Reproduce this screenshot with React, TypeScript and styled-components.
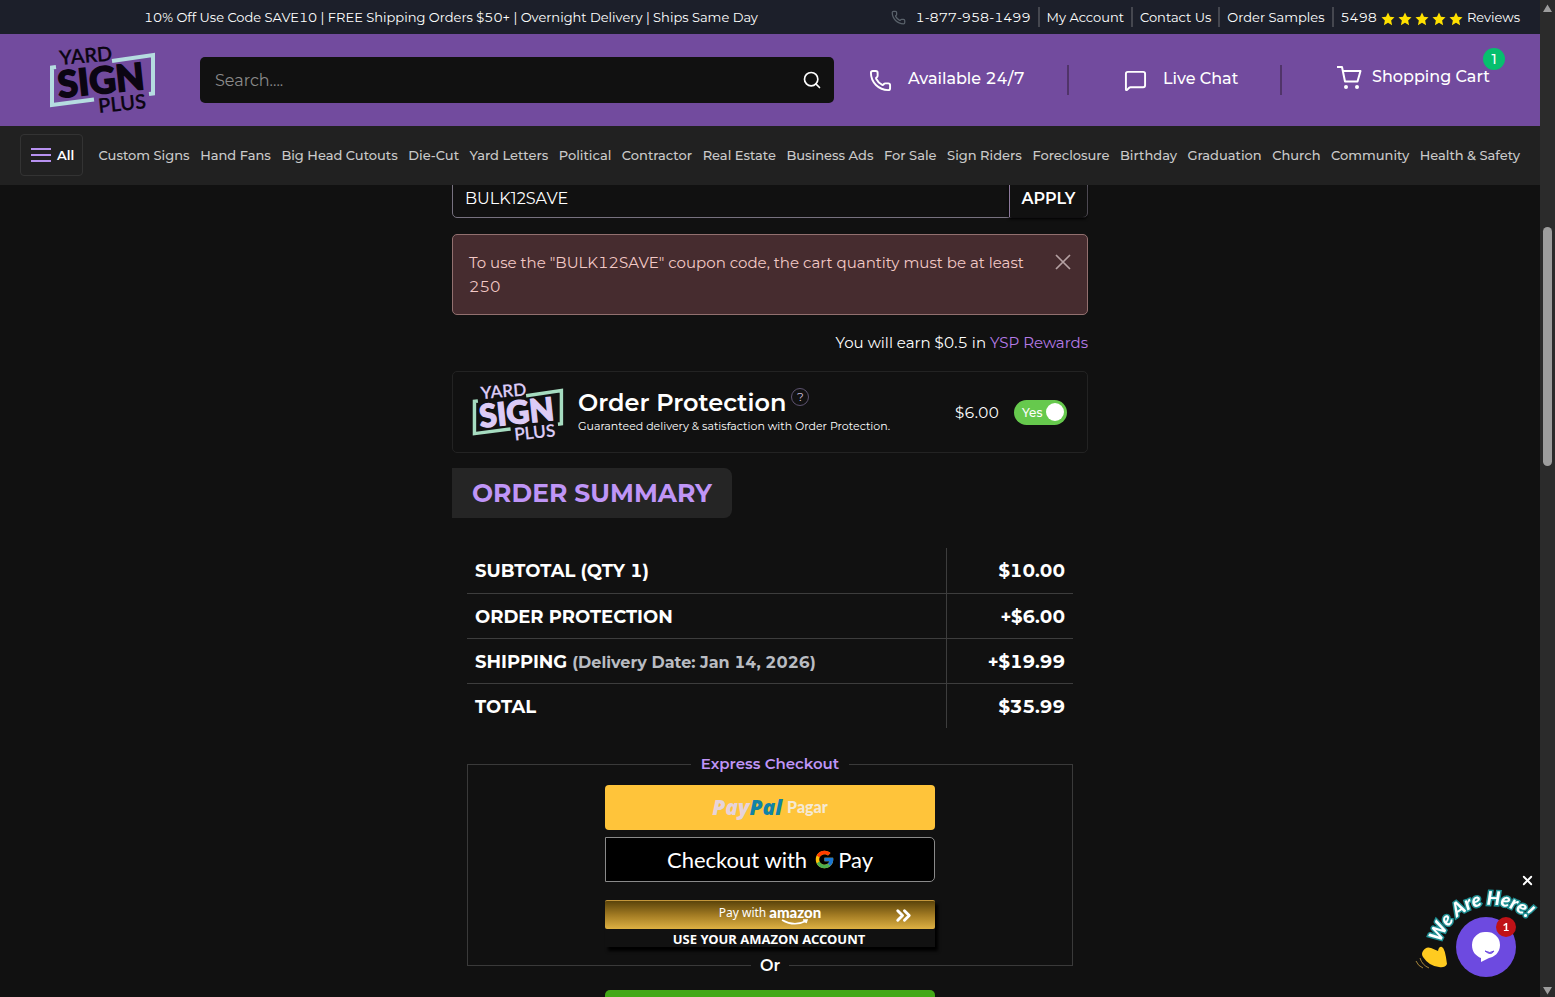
import React from "react";
import styled, { createGlobalStyle } from "styled-components";
import { ChevronsRight, MessageSquare, Phone, Search, X } from "lucide-react";
import { FcGoogle } from "react-icons/fc";

const GlobalStyle = createGlobalStyle`
  *, *::before, *::after { box-sizing: border-box; }
  body {
    margin: 0;
    background: #111;
    color: #fff;
    font-family: Montserrat, Inter, "Liberation Sans", sans-serif;
    font-size: 15px;
    font-variant-numeric: tabular-nums;
  }
  a { color: inherit; text-decoration: none; }
  button, input { font-family: inherit; color: inherit; }
  button { cursor: pointer; }
`;

const Shell = styled.div`
  display: grid;
  grid-template-columns: minmax(0, 1fr) 15px;
  height: 100vh;
  overflow: hidden;
`;

const Page = styled.div`
  display: flex;
  flex-direction: column;
  min-height: 0;
`;

const TopBar = styled.div`
  display: flex;
  align-items: center;
  justify-content: space-between;
  flex: none;
  height: 34px;
  padding: 0 20px 0 144px;
  background: #1c1f2a;
  font-size: 13px;
`;

const TopLinks = styled.div`
  display: flex;
  align-items: center;
`;

const TopLink = styled.a<{ $first?: boolean }>`
  display: flex;
  align-items: center;
  gap: ${(p) => (p.$first ? 10 : 4)}px;
  height: 20px;
  padding: 0 7px;
  border-left: ${(p) => (p.$first ? "0" : "2px solid #45474f")};
  &:last-child { padding-right: 0; }
`;

const Stars = styled.span`
  display: flex;
  gap: 3px;
  padding-top: 3px;
`;

const Header = styled.header`
  display: flex;
  align-items: center;
  flex: none;
  height: 92px;
  padding: 0 50px 0 48px;
  background: #724b9e;
`;

const LogoLink = styled.a`
  display: flex;
  flex: none;
  width: 152px;
`;

const SearchBox = styled.form`
  display: flex;
  align-items: center;
  flex: 1;
  height: 46px;
  margin-right: 35px;
  border-radius: 5px;
  background: #111;
`;

const SearchInput = styled.input`
  flex: 1;
  min-width: 0;
  height: 100%;
  padding: 0 15px;
  border: 0;
  outline: 0;
  background: transparent;
  font-size: 16px;
  &::placeholder { color: #8b8b8b; opacity: 1; }
`;

const IconButton = styled.button`
  display: flex;
  padding: 0 12px;
  border: 0;
  background: transparent;
`;

const Actions = styled.nav`
  display: grid;
  grid-template-columns: 200px 213px 208px;
  align-items: center;
`;

const Action = styled.a<{ $first?: boolean; $last?: boolean }>`
  position: relative;
  display: flex;
  align-items: center;
  gap: ${(p) => (p.$last ? 10 : 16)}px;
  height: 30px;
  padding-left: ${(p) => (p.$first ? 0 : 55)}px;
  padding-bottom: ${(p) => (p.$last ? 4 : 0)}px;
  border-right: ${(p) => (p.$last ? "0" : "2px solid #503469")};
  font-size: 16px;
  font-weight: 500;
  white-space: nowrap;
`;

const ActionLabel = styled.span`
  padding-bottom: 3px;
`;

const CartBadge = styled.span`
  position: absolute;
  top: -17px;
  right: -15px;
  width: 22px;
  height: 22px;
  border-radius: 50%;
  background: #06bf6e;
  font-size: 14px;
  font-variant-numeric: normal;
  line-height: 22px;
  text-align: center;
`;

const CategoryBar = styled.nav`
  display: flex;
  align-items: center;
  justify-content: space-between;
  flex: none;
  height: 59px;
  padding: 0 20px 2px;
  background: #212121;
  color: #cacaca;
  font-size: 13px;
  font-weight: 500;
  white-space: nowrap;
`;

const AllButton = styled.button`
  display: flex;
  align-items: center;
  gap: 6px;
  width: 63px;
  height: 42px;
  margin-right: 5px;
  padding: 0 0 0 10px;
  border: 1px solid #333;
  border-radius: 4px;
  background: transparent;
  color: #fff;
  font-size: 13px;
  font-weight: 600;
`;

const Burger = styled.span`
  flex: none;
  width: 20px;
  height: 14px;
  border-top: 2px solid #b791f0;
  border-bottom: 2px solid #b791f0;
  &::before {
    content: "";
    display: block;
    height: 2px;
    margin-top: 4px;
    background: #b791f0;
  }
`;

const Main = styled.main`
  flex: 1;
  min-height: 0;
  overflow: hidden;
`;

const Column = styled.div`
  width: 100%;
  max-width: 636px;
  margin: -5px auto 0;
`;

const CouponRow = styled.form`
  display: flex;
  height: 38px;
  border: 1px solid #77717f;
  border-radius: 5px;
`;

const CouponInput = styled.input`
  flex: 1;
  min-width: 0;
  padding: 0 12px 2px;
  border: 0;
  outline: 0;
  background: transparent;
  font-size: 16px;
`;

const ApplyButton = styled.button`
  width: 78px;
  padding: 0 0 2px;
  border: 0;
  border-left: 1px solid #8d7a9c;
  border-radius: 0 4px 4px 0;
  background: transparent;
  box-shadow: 0 2px 3px #000;
  font-size: 16px;
  font-weight: 600;
`;

const Alert = styled.div`
  display: flex;
  align-items: flex-start;
  justify-content: space-between;
  margin-top: 16px;
  padding: 16px 16px 15px;
  border: 1px solid #92706f;
  border-radius: 5px;
  background: #462c2f;
  color: #f3c9c6;
  font-size: 15px;
  line-height: 24px;
`;

const AlertText = styled.p`
  max-width: 570px;
  margin: 0;
`;

const CloseButton = styled.button`
  display: flex;
  padding: 3px 0;
  border: 0;
  background: transparent;
  color: #b5a1a2;
`;

const Rewards = styled.p`
  margin: 16px 0;
  font-size: 15px;
  line-height: 24px;
  text-align: right;
  a { color: #b57be6; }
`;

const Protection = styled.section`
  display: flex;
  align-items: center;
  height: 82px;
  padding: 0 20px 0 18px;
  border: 1px solid #232323;
  border-radius: 5px;
`;

const ProtectionText = styled.div`
  flex: 1;
  padding: 0 0 3px 14px;
`;

const ProtectionTitle = styled.h3`
  display: flex;
  gap: 5px;
  margin: 0;
  font-size: 24px;
  font-weight: 600;
  line-height: 30px;
`;

const HelpButton = styled.button`
  width: 18px;
  height: 18px;
  padding: 0;
  border: 1px solid #5d5370;
  border-radius: 50%;
  background: transparent;
  color: #c9bddb;
  font-size: 12px;
  line-height: 16px;
`;

const ProtectionNote = styled.p`
  margin: 0;
  font-size: 11px;
  line-height: 16px;
`;

const Toggle = styled.label`
  position: relative;
  display: flex;
  align-items: center;
  justify-content: space-between;
  width: 53px;
  height: 25px;
  margin-left: 15px;
  padding: 0 3px 0 8px;
  border-radius: 13px;
  background: #66c94d;
  font-size: 12px;
  font-weight: 500;
  input { position: absolute; inset: 0; width: 100%; height: 100%; margin: 0; opacity: 0; }
`;

const Knob = styled.span`
  width: 18px;
  height: 18px;
  border-radius: 50%;
  background: #fff;
`;

const SummaryTitle = styled.h2`
  width: 280px;
  height: 50px;
  margin: 15px 0 30px;
  padding-left: 20px;
  border-radius: 0 8px 8px 0;
  background: #252525;
  color: #bf95f7;
  font-size: 25px;
  font-weight: 700;
  line-height: 50px;
  white-space: nowrap;
`;

const Inset = styled.div`
  margin: 0 15px;
`;

const Totals = styled.table`
  width: 100%;
  border-collapse: collapse;
  font-size: 18px;
  font-weight: 700;
  th, td { height: 45px; padding: 2px 8px 0; font-weight: 700; }
  th { text-align: left; }
  td { width: 127px; border-left: 1px solid #3d3d3d; text-align: right; }
  tr + tr { border-top: 1px solid #3d3d3d; }
  small { color: #b9bcc2; font-size: 16px; }
`;

const Express = styled.fieldset`
  display: flex;
  flex-direction: column;
  align-items: center;
  height: 211px;
  min-width: 0;
  margin: 26px 0 0;
  padding: 11px 0 0;
  border: 1px solid #3a3a3a;
  border-bottom: 0;
`;

const ExpressLegend = styled.legend`
  margin: 0 auto;
  padding: 0 10px;
  color: #bf95f7;
  font-size: 15px;
  font-weight: 600;
  line-height: 20px;
`;

const PayButton = styled.button<{ $kind: "paypal" | "google" }>`
  display: flex;
  align-items: center;
  justify-content: center;
  gap: ${(p) => (p.$kind === "paypal" ? 5 : 7)}px;
  width: 330px;
  height: 45px;
  margin-bottom: 7px;
  padding: ${(p) => (p.$kind === "paypal" ? "0 0 2px" : "0")};
  border: ${(p) => (p.$kind === "paypal" ? "0" : "1px solid #8a8a8a")};
  border-radius: ${(p) => (p.$kind === "paypal" ? "4px" : "0 5px 5px 0")};
  background: ${(p) => (p.$kind === "paypal" ? "#ffc43a" : "#000")};
  font-family: Lato, Inter, sans-serif;
  font-size: 22px;
`;

const PayPalMark = styled.span`
  color: #e6d3da;
  font-family: "Open Sans", sans-serif;
  font-size: 21px;
  font-style: italic;
  font-weight: 800;
  line-height: 24px;
  b { color: #1183a5; font-weight: 800; }
`;

const PayPalVerb = styled.span`
  color: #f5e9d2;
  font-family: Lato, sans-serif;
  font-size: 16px;
  font-weight: 900;
`;

const GoogleMark = styled.span`
  display: flex;
  align-items: center;
  gap: 3px;
`;

const AmazonButton = styled.button`
  width: 330px;
  margin-top: 11px;
  padding: 0;
  border: 0;
  background: #111;
  box-shadow: 3px 4px 3px #000;
  font-family: "Noto Sans", "Open Sans", sans-serif;
`;

const AmazonGold = styled.span`
  display: grid;
  grid-template-columns: 1fr auto 1fr;
  align-items: center;
  height: 29px;
  padding-right: 20px;
  border-top: 1px solid #c4973b;
  border-radius: 2px;
  background: linear-gradient(#5a430a, #a27b23 50%, #deb143);
  font-size: 12px;
  svg:last-child { justify-self: end; }
`;

const AmazonLabel = styled.span`
  grid-column: 2;
  display: flex;
  align-items: flex-start;
  gap: 3px;
  padding-left: 20px;
  line-height: 16px;
`;

const AmazonMark = styled.span`
  display: flex;
  flex-direction: column;
  align-items: center;
  height: 20px;
  font-family: Lato, sans-serif;
  font-size: 15px;
  font-weight: 900;
  line-height: 14px;
`;

const AmazonNote = styled.span`
  display: block;
  height: 18px;
  padding-right: 2px;
  font-size: 13px;
  font-weight: 700;
  line-height: 20px;
`;

const OrDivider = styled.div`
  display: flex;
  align-items: center;
  gap: 9px;
  height: 20px;
  margin-top: -10px;
  font-size: 16px;
  font-weight: 600;
  &::before, &::after {
    content: "";
    flex: 1;
    height: 1px;
    background: #3a3a3a;
  }
`;

const CheckoutButton = styled.button`
  display: block;
  width: 330px;
  height: 45px;
  margin: 15px auto 0;
  border: 0;
  border-radius: 5px;
  background: #43a817;
  font-size: 16px;
`;

const ScrollBar = styled.div`
  display: flex;
  flex-direction: column;
  align-items: center;
  background: #2b2b2b;
`;

const ScrollThumb = styled.div`
  width: 9px;
  height: 24%;
  margin: 211px 0 auto;
  border-radius: 5px;
  background: #9d9d9d;
`;

const ChatWidget = styled.aside`
  position: fixed;
  right: 15px;
  bottom: 0;
  width: 125px;
  height: 127px;
`;

const ChatClose = styled.button`
  position: absolute;
  top: 3px;
  right: 5px;
  display: flex;
  padding: 0;
  border: 0;
  background: transparent;
`;

const ChatBubble = styled.button`
  position: absolute;
  left: 41px;
  top: 47px;
  display: flex;
  align-items: center;
  justify-content: center;
  width: 60px;
  height: 60px;
  padding: 0;
  border: 0;
  border-radius: 50%;
  background: #6d4ae0;
`;

const ChatCount = styled.span`
  position: absolute;
  top: 0;
  right: 0;
  width: 20px;
  height: 20px;
  border-radius: 50%;
  background: #c01217;
  font-family: Lato, sans-serif;
  font-size: 12px;
  font-weight: 700;
  line-height: 20px;
`;

const ChatArt = styled.svg`
  position: absolute;
  inset: 0;
  overflow: visible;
  pointer-events: none;
`;

const LogoArt = styled.svg`
  flex: none;
  overflow: visible;
`;

function Logo({ width, ink, frame }: { width: number; ink: string; frame: string }) {
  return (
    <LogoArt width={width} viewBox="0 0 108 70" role="img" aria-label="Yard Sign Plus">
      <g fill="none" stroke={frame} strokeWidth="4">
        <path d="M8 22 L4 22.500 V60 L46 54.500" />
        <path d="M64 16 L105 10 V48.500 L101 49" />
      </g>
      <g fill={ink} stroke={ink}>
        <text transform="translate(12 20) rotate(-5)" fontFamily="Lato" fontSize="20" fontWeight="600" strokeWidth="0.200">YARD</text>
        <text transform="translate(11 53) rotate(-6)" fontFamily="Lato" fontSize="37" fontWeight="900" strokeWidth="1.500">SIGN</text>
        <text transform="translate(51 68) rotate(-6)" fontFamily="Lato" fontSize="20" fontWeight="600" strokeWidth="0.200">PLUS</text>
      </g>
    </LogoArt>
  );
}

function Star() {
  return (
    <svg width="14" height="14" viewBox="0 0 24 24" fill="#ffe100" aria-hidden="true">
      <path d="M12 1l3.400 7.300 7.800.9-5.800 5.400 1.600 7.900-7-4-7 4 1.600-7.900L.8 9.200l7.800-.9z" />
    </svg>
  );
}

function CartIcon() {
  return (
    <svg width="25" height="25" viewBox="0 0 25 25" fill="none" stroke="#fff" strokeWidth="2" strokeLinejoin="round" aria-hidden="true">
      <path d="M0 1h5l3 14.500h12.500L23.500 5H6" />
      <circle cx="9" cy="21" r="2" fill="#fff" stroke="none" />
      <circle cx="20" cy="21" r="2" fill="#fff" stroke="none" />
    </svg>
  );
}

const categories = [
  "Custom Signs", "Hand Fans", "Big Head Cutouts", "Die-Cut", "Yard Letters", "Political",
  "Contractor", "Real Estate", "Business Ads", "For Sale", "Sign Riders", "Foreclosure",
  "Birthday", "Graduation", "Church", "Community", "Health & Safety",
];

const totals: { label: string; note?: string; amount: string }[] = [
  { label: "SUBTOTAL (QTY 1)", amount: "$10.00" },
  { label: "ORDER PROTECTION", amount: "+$6.00" },
  { label: "SHIPPING", note: "(Delivery Date: Jan 14, 2026)", amount: "+$19.99" },
  { label: "TOTAL", amount: "$35.99" },
];

export default function App() {
  return (
    <>
      <GlobalStyle />
      <Shell>
        <Page>
          <TopBar>
            <span>10% Off Use Code SAVE10 | FREE Shipping Orders $50+ | Overnight Delivery | Ships Same Day</span>
            <TopLinks>
              <TopLink $first href="#phone"><Phone size={15} color="#59616a" />1-877-958-1499</TopLink>
              <TopLink href="#account">My Account</TopLink>
              <TopLink href="#contact">Contact Us</TopLink>
              <TopLink href="#samples">Order Samples</TopLink>
              <TopLink href="#reviews">
                5498
                <Stars>{[1, 2, 3, 4, 5].map((n) => <Star key={n} />)}</Stars>
                Reviews
              </TopLink>
            </TopLinks>
          </TopBar>
          <Header>
            <LogoLink href="#home"><Logo width={108} ink="#0b0512" frame="#b5dce0" /></LogoLink>
            <SearchBox role="search">
              <SearchInput aria-label="Search" placeholder="Search...." />
              <IconButton type="button" aria-label="Search"><Search size={20} /></IconButton>
            </SearchBox>
            <Actions aria-label="Help and cart">
              <Action $first href="#call"><Phone size={23} /><ActionLabel>Available 24/7</ActionLabel></Action>
              <Action href="#chat"><MessageSquare size={23} /><ActionLabel>Live Chat</ActionLabel></Action>
              <Action $last href="#cart"><CartIcon /><ActionLabel>Shopping Cart</ActionLabel><CartBadge>1</CartBadge></Action>
            </Actions>
          </Header>
          <CategoryBar aria-label="Categories">
            <AllButton type="button"><Burger />All</AllButton>
            {categories.map((c) => <a key={c} href="#category">{c}</a>)}
          </CategoryBar>
          <Main>
            <Column>
              <CouponRow>
                <CouponInput aria-label="Coupon code" defaultValue="BULK12SAVE" />
                <ApplyButton type="button">APPLY</ApplyButton>
              </CouponRow>
              <Alert role="alert">
                <AlertText>To use the "BULK12SAVE" coupon code, the cart quantity must be at least 250</AlertText>
                <CloseButton type="button" aria-label="Dismiss">
                  <svg width="16" height="16" viewBox="0 0 16 16" stroke="currentColor" strokeWidth="1.700" aria-hidden="true">
                    <path d="M1 1L15 15M15 1L1 15" />
                  </svg>
                </CloseButton>
              </Alert>
              <Rewards>You will earn $0.5 in <a href="#rewards">YSP Rewards</a></Rewards>
              <Protection>
                <Logo width={93} ink="#dccbf6" frame="#a6dcc0" />
                <ProtectionText>
                  <ProtectionTitle>Order Protection<HelpButton type="button">?</HelpButton></ProtectionTitle>
                  <ProtectionNote>Guaranteed delivery &amp; satisfaction with Order Protection.</ProtectionNote>
                </ProtectionText>
                <span>$6.00</span>
                <Toggle>
                  <input type="checkbox" defaultChecked />
                  Yes
                  <Knob />
                </Toggle>
              </Protection>
              <SummaryTitle>ORDER SUMMARY</SummaryTitle>
              <Inset>
                <Totals>
                  <tbody>
                    {totals.map((t) => (
                      <tr key={t.label}>
                        <th scope="row">{t.label}{t.note && <> <small>{t.note}</small></>}</th>
                        <td>{t.amount}</td>
                      </tr>
                    ))}
                  </tbody>
                </Totals>
                <Express>
                  <ExpressLegend>Express Checkout</ExpressLegend>
                  <PayButton type="button" $kind="paypal">
                    <PayPalMark>Pay<b>Pal</b></PayPalMark>
                    <PayPalVerb>Pagar</PayPalVerb>
                  </PayButton>
                  <PayButton type="button" $kind="google">
                    Checkout with
                    <GoogleMark><FcGoogle size={21} />Pay</GoogleMark>
                  </PayButton>
                  <AmazonButton type="button">
                    <AmazonGold>
                      <AmazonLabel>
                        Pay with
                        <AmazonMark>
                          amazon
                          <svg width="28" height="6" viewBox="0 0 28 6" fill="none" stroke="#fff" strokeWidth="1.500" aria-hidden="true">
                            <path d="M1 1q12 7 24 1M22 1h4l-1 3" />
                          </svg>
                        </AmazonMark>
                      </AmazonLabel>
                      <ChevronsRight size={23} strokeWidth={3} />
                    </AmazonGold>
                    <AmazonNote>USE YOUR AMAZON ACCOUNT</AmazonNote>
                  </AmazonButton>
                </Express>
                <OrDivider>Or</OrDivider>
                <CheckoutButton type="button" aria-label="Checkout" />
              </Inset>
            </Column>
          </Main>
        </Page>
        <ScrollBar aria-hidden="true">
          <svg width="15" height="16" fill="#9d9d9d"><path d="M7.500 4.500L12 12H3z" /></svg>
          <ScrollThumb />
          <svg width="15" height="16" fill="#9d9d9d"><path d="M7.500 13.500L12 6H3z" /></svg>
        </ScrollBar>
      </Shell>
      <ChatWidget aria-label="Chat">
        <ChatArt viewBox="0 0 125 127" aria-hidden="true">
          <path id="chat-arc" d="M26 73A52.400 52.400 0 0 1 128 78" fill="none" />
          <text
            fontFamily="Lato" fontSize="19" fontWeight="900" fontStyle="italic"
            fill="#fff" stroke="#1f8f93" strokeWidth="3" paintOrder="stroke"
          >
            <textPath href="#chat-arc">We Are Here!</textPath>
          </text>
          <path d="M8 81q3-5 8-3l7 3q1-5 4-4 3 1 5 17-2 4-8 3-10-1-16-10-2-3 0-6z" fill="#ffcb20" />
          <path d="M5 88q2 7 9 10M1 91q2 5 7 7" fill="none" stroke="#a8873a" />
        </ChatArt>
        <ChatBubble type="button" aria-label="Open chat">
          <svg width="30" height="32" viewBox="0 0 30 32" aria-hidden="true">
            <path d="M15 1a13 13 0 0 1 14 13c0 8-6 12-11 13l-8 4v-4C5 25 1 21 1 14A13 13 0 0 1 15 1z" fill="#fff" />
            <path d="M14 20q5 3 9 0q-3 5-9 0z" fill="#6d4ae0" stroke="#6d4ae0" />
          </svg>
          <ChatCount>1</ChatCount>
        </ChatBubble>
        <ChatClose type="button" aria-label="Close chat"><X size={15} strokeWidth={3} /></ChatClose>
      </ChatWidget>
    </>
  );
}
